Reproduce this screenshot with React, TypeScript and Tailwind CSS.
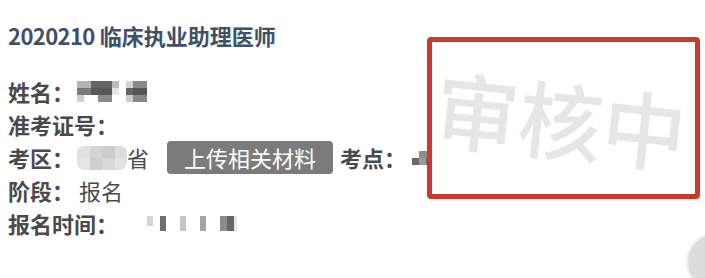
type Cell = string;

function Mosaic({ rows, cell = 7, className = "" }: { rows: Cell[][]; cell?: number; className?: string }) {
  return (
    <span className={`inline-flex flex-col ${className}`}>
      {rows.map((r, i) => (
        <span key={i} className="flex">
          {r.map((c, j) => (
            <span key={j} className="block" style={{ width: cell, height: cell, background: c }} />
          ))}
        </span>
      ))}
    </span>
  );
}

const W = "#ffffff";

export default function App() {
  return (
    <div className="relative h-[278px] w-[705px] overflow-hidden bg-white font-['Noto_Sans_CJK_SC',sans-serif]">
      <div className="pl-[8px] pt-[19px]">
        <h1 className="text-[22px] font-bold leading-[33px] text-[#3e5168]">
          <span className="tracking-[-0.6px]">2020210</span> 临床执业助理医师
        </h1>
        <div className="mt-[23px] text-[22px] leading-[33px] text-[#4a4a4a]">
          <div className="flex items-center">
            <span className="font-bold">姓名：</span>
            <Mosaic
              className="ml-[3px]"
              rows={[
                ["#b4b4b4", "#b4b4b4", "#666", "#666", "#666", "#bcbcbc"],
                ["#7a7a7a", "#7a7a7a", "#585858", "#585858", "#585858", "#e4e4e4"],
                ["#d0d0d0", W, W, "#8a8a8a", "#8a8a8a", W],
              ]}
            />
            <Mosaic
              className="ml-[7px]"
              rows={[
                ["#d4d4d4", "#8a8a8a", "#8a8a8a"],
                ["#666", "#555", "#555"],
                ["#cccccc", "#888", "#888"],
              ]}
            />
          </div>
          <div className="font-bold">准考证号：</div>
          <div className="flex items-center">
            <span className="font-bold">考区：</span>
            <span className="ml-[3px] flex h-[24px] w-[50px] flex-col overflow-hidden rounded-[7px]">
              <span className="flex flex-1">
                <span className="flex-1 bg-[#e0e0e0]" />
                <span className="flex-1 bg-[#d4d4d4]" />
                <span className="flex-1 bg-[#cdcdcd]" />
                <span className="flex-1 bg-[#dcdcdc]" />
              </span>
              <span className="flex flex-1">
                <span className="flex-1 bg-[#e4e4e4]" />
                <span className="flex-1 bg-[#cfcfcf]" />
                <span className="flex-1 bg-[#d8d8d8]" />
                <span className="flex-1 bg-[#e2e2e2]" />
              </span>
            </span>
            <span>省</span>
            <span className="ml-[18px] rounded-[4px] bg-[#7b7b7b] px-[17px] leading-[33px] text-white">上传相关材料</span>
            <span className="ml-[7px] font-bold">考点：</span>
            <Mosaic
              className="ml-[6px]"
              cell={7}
              rows={[
                [W, "#8c8c8c", "#8c8c8c", W, "#e0e0e0"],
                ["#6a6a6a", "#9a9a9a", "#666", W, W],
              ]}
            />
          </div>
          <div className="flex items-center">
            <span className="font-bold">阶段：</span>
            <span className="ml-[5px]">报名</span>
          </div>
          <div className="flex items-center">
            <span className="font-bold">报名时间：</span>
            <span className="ml-[29px] flex items-center">
              <span className="h-[10px] w-[6px] self-start bg-[#d4d4d4]" />
              <span className="ml-[7px] h-[15px] w-[6px] bg-[#6e6e6e]" />
              <span className="ml-[14px] h-[15px] w-[6px] bg-[#c4c4c4]" />
              <span className="ml-[14px] h-[15px] w-[6px] bg-[#a4a4a4]" />
              <span className="ml-[14px] h-[15px] w-[7px] bg-[#8c8c8c]" />
              <span className="h-[15px] w-[7px] bg-[#666]" />
              <span className="h-[15px] w-[3px] bg-[#e6e6e6]" />
            </span>
          </div>
        </div>
      </div>
      <div className="absolute left-[427px] top-[37px] h-[162px] w-[273px] rounded-[4px] border-[5px] border-[#c63b2c] bg-white">
        <div className="flex h-full items-center justify-center">
          <span className="ml-[-4px] rotate-[6deg] whitespace-nowrap text-[84px] font-medium leading-none text-[#e6e6e6]">
            审核中
          </span>
        </div>
      </div>
      <div className="absolute left-[686px] top-[232px] h-[60px] w-[60px] rounded-full border-2 border-[#f0f0f0] bg-[#dcdcdc]" />
    </div>
  );
}
